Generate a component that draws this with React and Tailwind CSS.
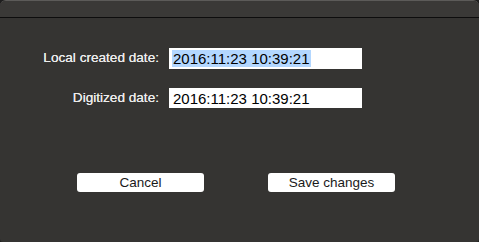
export default function App() {
  const font = { fontFamily: '"Liberation Sans", Arial, sans-serif' };
  return (
    <div className="w-[479px] h-[242px] bg-[#1e1e1e]" style={font}>
      <div className="w-full h-full rounded-t-[6px] rounded-b-[3px] overflow-hidden bg-[#353432] flex flex-col border-t border-[#5c5b59]">
        {/* title strip */}
        <div className="h-[17px] bg-[#3a3937] border-b border-[#0d0d0d] shrink-0" />

        {/* form */}
        <div className="flex flex-col gap-[19px] pt-[30px]">
          <div className="flex items-center h-[21px]">
            <label className="w-[169px] pr-[10px] text-right text-[13.6px] text-[#ececec] [text-shadow:0_0_0.4px_#ececec]">Local created date:</label>
            <div className="w-[193px] h-[21px] bg-white flex items-center pl-[3px]">
              <span className="bg-[#b3d7ff] text-black text-[15px] leading-[17px] px-[1px]">2016:11:23 10:39:21</span>
            </div>
          </div>
          <div className="flex items-center h-[20px]">
            <label className="w-[169px] pr-[10px] text-right text-[13.6px] text-[#ececec] [text-shadow:0_0_0.4px_#ececec]">Digitized date:</label>
            <div className="w-[193px] h-[20px] bg-white flex items-center pl-[4px]">
              <span className="text-black text-[15px] leading-[17px]">2016:11:23 10:39:21</span>
            </div>
          </div>
        </div>

        {/* buttons */}
        <div className="flex gap-[64px] pl-[77px] mt-[65px]">
          <button className="w-[127px] h-[19px] bg-white rounded-[3px] text-[13.5px] text-[#1a1a1a] leading-[19px]">Cancel</button>
          <button className="w-[127px] h-[19px] bg-white rounded-[3px] text-[13.5px] text-[#1a1a1a] leading-[19px]">Save changes</button>
        </div>
      </div>
    </div>
  );
}
